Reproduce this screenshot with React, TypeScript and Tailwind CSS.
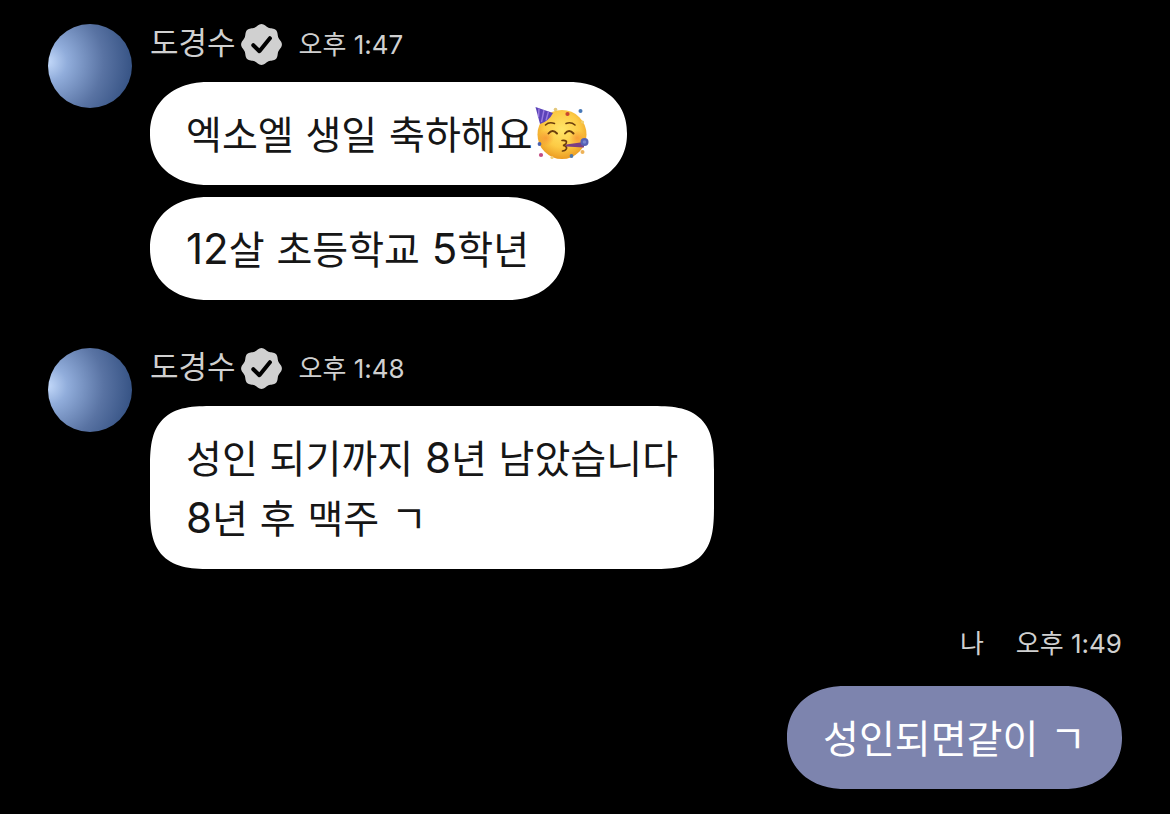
import * as React from "react";
import { clsx } from "clsx";

type Message = {
  id: string;
  lines: string[];
  emoji?: boolean;
};

type Group = {
  id: string;
  author: string;
  time: string;
  messages: Message[];
};

const GROUPS: Group[] = [
  {
    id: "g1",
    author: "도경수",
    time: "오후 1:47",
    messages: [
      { id: "m1", lines: ["엑소엘 생일 축하해요"], emoji: true },
      { id: "m2", lines: ["12살 초등학교 5학년"] },
    ],
  },
  {
    id: "g2",
    author: "도경수",
    time: "오후 1:48",
    messages: [
      { id: "m3", lines: ["성인 되기까지 8년 남았습니다", "8년 후 맥주 ㄱ"] },
    ],
  },
];

/** Closed outline of an eight-lobed disc. */
function lobedDisc(center: number, radius: number, depth: number) {
  const steps = 128;
  const points: string[] = [];
  for (let i = 0; i < steps; i++) {
    const angle = (i / steps) * Math.PI * 2;
    const r = radius + depth * Math.cos(angle * 8);
    const x = center + r * Math.sin(angle);
    const y = center - r * Math.cos(angle);
    points.push(`${x.toFixed(2)} ${y.toFixed(2)}`);
  }
  return `M${points.join("L")}Z`;
}

const BADGE_PATH = lobedDisc(20.5, 19.3, 1.1);

function VerifiedBadge() {
  return (
    <svg viewBox="0 0 41 41" className="size-[41px] shrink-0" role="img" aria-label="인증됨">
      <path d={BADGE_PATH} fill="#d0d0d0" />
      <path
        d="M12.3 21.2L18.4 27.2L28.9 14.2"
        fill="none"
        stroke="#000"
        strokeWidth="4"
        strokeLinecap="round"
        strokeLinejoin="round"
      />
    </svg>
  );
}

/** Partying face: hat, closed smiling eyes, party horn, confetti. */
function PartyFace() {
  return (
    <svg viewBox="0 0 56 56" className="ml-0.5 size-14 shrink-0" role="img" aria-label="파티 얼굴">
      <defs>
        <radialGradient id="face" cx="0.5" cy="0.4" r="0.6">
          <stop offset="0" stopColor="#ffe568" />
          <stop offset="0.6" stopColor="#fdcb45" />
          <stop offset="1" stopColor="#ec9c22" />
        </radialGradient>
        <radialGradient id="blush">
          <stop offset="0" stopColor="#f5822e" stopOpacity="0.6" />
          <stop offset="1" stopColor="#f5822e" stopOpacity="0" />
        </radialGradient>
      </defs>
      <circle cx="27" cy="28.5" r="24.5" fill="url(#face)" />
      <circle cx="11" cy="32" r="8" fill="url(#blush)" />
      <circle cx="42" cy="32" r="8" fill="url(#blush)" />
      {/* hat */}
      <path d="M0.500 1L18 7Q14 15 5 18Z" fill="#5b43b8" />
      <path d="M4 2.500L3.500 11M9 4L6.500 16M13.500 5.500L11 14.500" stroke="#9a7be0" strokeWidth="1.400" />
      {/* brows and eyes */}
      <g fill="none" stroke="#6b3d0c" strokeLinecap="round">
        <path d="M10.500 19Q14 15.500 19.500 17.500" strokeWidth="1.600" />
        <path d="M31 17.500Q36 15.500 40 19" strokeWidth="1.600" />
        <path d="M13.500 27.500Q17.500 22.500 22 27.500" strokeWidth="2" />
        <path d="M30 27.500Q34 22.500 38.500 27.500" strokeWidth="2" />
      </g>
      <path
        d="M27 34.500Q33 34 31 37.500Q30 39 28 39.500Q32 40 31.500 42.500Q30.500 45 27.500 45"
        fill="none"
        stroke="#6b3d0c"
        strokeWidth="1.700"
        strokeLinecap="round"
      />
      {/* horn */}
      <path d="M31 38.500L49 36V41.500L31 40.500Z" fill="#7c3f83" />
      <circle cx="49.500" cy="36" r="4" fill="#5661b5" />
      <circle cx="49.500" cy="36" r="1.800" fill="#7986cf" />
      {/* confetti */}
      <circle cx="32.500" cy="8" r="2.100" fill="#c8452f" />
      <circle cx="45.500" cy="5" r="2" fill="#4778b8" />
      <circle cx="20.500" cy="3.500" r="1.800" fill="#e3c87c" />
      <circle cx="47.500" cy="16" r="1.600" fill="#f2cf69" />
      <circle cx="4.500" cy="38" r="1.900" fill="#4b62ae" />
      <circle cx="6" cy="49" r="2.100" fill="#c34c82" />
      <circle cx="17" cy="51.500" r="1.600" fill="#f0cf7c" />
      <circle cx="36.500" cy="50" r="1.900" fill="#4d76a8" />
      <circle cx="47.500" cy="46" r="2" fill="#edb257" />
    </svg>
  );
}

/** Hangul is set a little smaller than the digits and spaces around it. */
function MixedText({ text }: { text: string }) {
  return text.split(/([ㄱ-힣]+)/).map((run, i) =>
    i % 2 === 1 ? (
      <span key={i} className="text-[39px] leading-none">
        {run}
      </span>
    ) : (
      run
    ),
  );
}

function Bubble({ message, own = false }: { message: Message; own?: boolean }) {
  return (
    <div
      className={clsx(
        "flex w-fit items-center px-9 pt-[22px] pb-[21px] text-[42px] leading-[60px]",
        message.lines.length > 1
          ? "rounded-[64px] [corner-shape:superellipse(1.6)]"
          : "rounded-[58px/51px] [corner-shape:superellipse(1.1)]",
        own ? "bg-[#7d84ae] text-white" : "bg-white text-[#161616]",
      )}
    >
      <div>
        {message.lines.map((line) => (
          <p key={line}>
            <MixedText text={line} />
          </p>
        ))}
      </div>
      {message.emoji && <PartyFace />}
    </div>
  );
}

function MessageGroup({ group }: { group: Group }) {
  return (
    <section className="flex items-start gap-[18px]">
      <div className="size-[84px] shrink-0 rounded-full bg-[radial-gradient(circle_at_0%_45%,#c3d9fa_0%,#91addb_20%,#5973a3_58%,#294779_100%)]" />
      <div>
        <header className="mb-[17px] flex h-[41px] items-start text-[#d0d0d0]">
          <h2 className="mr-[5px] text-[31px] leading-[38px]">{group.author}</h2>
          <VerifiedBadge />
          <time className="ml-[17px] text-[26px] leading-[41px]">{group.time}</time>
        </header>
        <div className="flex flex-col gap-3">
          {group.messages.map((message) => (
            <Bubble key={message.id} message={message} />
          ))}
        </div>
      </div>
    </section>
  );
}

export default function App() {
  return (
    <main className="flex min-h-screen flex-col gap-12 bg-black px-12 py-6 font-['Inter','Noto_Sans_CJK_KR',sans-serif]">
      {GROUPS.map((group) => (
        <MessageGroup key={group.id} group={group} />
      ))}
      <section className="mt-1.5 flex flex-col items-end">
        <header className="mb-[22px] flex items-center gap-8 text-[26px] leading-[41px] text-[#d0d0d0]">
          <h2>나</h2>
          <time>오후 1:49</time>
        </header>
        <Bubble own message={{ id: "m4", lines: ["성인되면같이 ㄱ"] }} />
      </section>
    </main>
  );
}
